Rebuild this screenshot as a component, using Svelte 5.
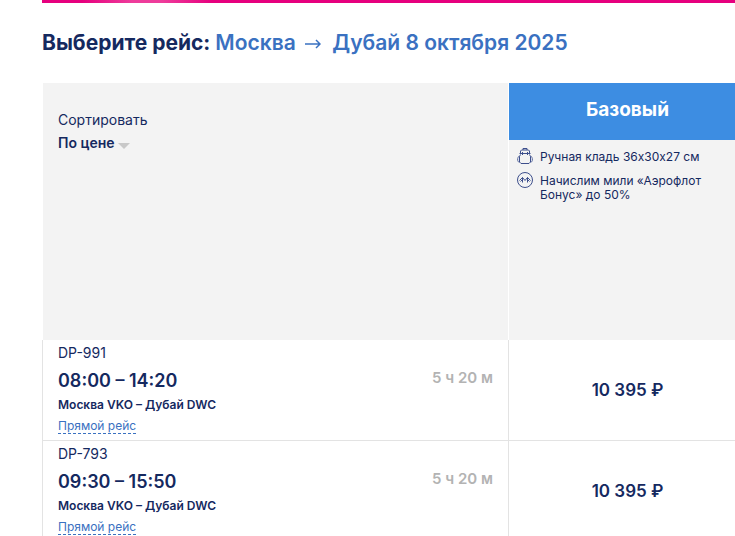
<script>
  const flights = [
    { code: 'DP-991', time: '08:00 – 14:20', route: 'Москва VKO – Дубай DWC', duration: '5 ч 20 м', price: '10 395 ₽' },
    { code: 'DP-793', time: '09:30 – 15:50', route: 'Москва VKO – Дубай DWC', duration: '5 ч 20 м', price: '10 395 ₽' }
  ];
  let sort = $state('price');
</script>

<main>
  <div class="banner"></div>
  <h1>
    Выберите рейс:
    <span class="trip">Москва
      <svg class="arrow" viewBox="0 0 16 12" aria-hidden="true"><path d="M0 6H15M11 2L15 6L11 10" /></svg>
      Дубай 8 октября 2025</span>
  </h1>

  <table>
    <colgroup><col /><col class="fare-col" /></colgroup>
    <thead>
      <tr>
        <th class="sort" scope="col">
          <label for="sort">Сортировать</label>
          <div class="picker">
            <select id="sort" bind:value={sort}>
              <option value="price">По цене</option>
            </select>
            <svg viewBox="0 0 12 6" aria-hidden="true"><path d="M0 0H12L6 6Z" /></svg>
          </div>
        </th>
        <th class="fare" scope="col">
          <div class="fare-name">Базовый</div>
          <ul>
            <li>
              <svg viewBox="0 0 16 16" aria-hidden="true">
                <path class="pockets" d="M2.5 8.500H1.500L.5 10.500V12.500L1.500 14H2.500M13.500 8.500H14.500L15.500 10.500V12.500L14.500 14H13.500" />
                <path d="M6 2V.5H10V2M3.500 5.500V3L4.500 2H11.500L12.500 3V5.500M5.500 4V7M10.500 4V7M3.500 6.500L2.500 8.500V14L4 15.500H12L13.500 14V8.500L12.500 6.500" />
                <path d="M2.500 5.500H13.500" />
              </svg>
              <span>Ручная кладь 36х30х27 см</span>
            </li>
            <li>
              <svg viewBox="0 0 16 16" aria-hidden="true">
                <circle cx="8" cy="8" r="7.500" />
                <path d="M5.500 10.500V5.500L8 8.500L10.500 5.500V10.500M2.500 8.500L5.500 5.500M3.500 9.500L5.500 7.500M10.500 5.500L13.500 8.500M10.500 7.500L12.500 9.500" />
              </svg>
              <span>Начислим мили «Аэрофлот Бонус» до 50%</span>
            </li>
          </ul>
        </th>
      </tr>
    </thead>
    <tbody>
      {#each flights as flight}
        <tr>
          <td class="flight">
            <div class="row">
              <div>
                <div class="code">{flight.code}</div>
                <div class="time">{flight.time}</div>
                <div class="route">{flight.route}</div>
                <button class="direct" type="button">Прямой рейс</button>
              </div>
              <div class="duration">{flight.duration}</div>
            </div>
          </td>
          <td class="price"><button type="button">{flight.price}</button></td>
        </tr>
      {/each}
    </tbody>
  </table>
</main>

<style>
  :global(body) {
    margin: 0;
    background: #fff;
  }
  main {
    padding-left: 42px;
    color: #15295f;
    font-family: Inter, 'Noto Sans', sans-serif;
    font-size: 14px;
  }
  button,
  select {
    margin: 0;
    padding: 0;
    border: 0;
    background: none;
    color: inherit;
    font: inherit;
    cursor: pointer;
  }
  .banner {
    height: 3px;
    background: linear-gradient(90deg, #e6007e 40px, #ee3c9b 90px, #ee3c9b 120px, #e6007e 170px);
  }
  h1 {
    margin: 0;
    padding: 24px 0;
    font-size: 21px;
    line-height: 32px;
    font-weight: 700;
    white-space: nowrap;
  }
  .trip {
    color: #3a71c1;
    font-weight: 600;
  }
  .arrow {
    width: 16px;
    height: 12px;
    margin: 0 6px 0 4px;
    fill: none;
    stroke: currentColor;
    stroke-width: 1.5;
  }
  table {
    width: 100%;
    table-layout: fixed;
    border-spacing: 0;
  }
  .fare-col {
    width: 226px;
  }
  th,
  td {
    padding: 0;
    text-align: left;
    vertical-align: top;
    font-weight: 400;
  }
  th {
    height: 257px;
    background: #f3f3f3;
    background-clip: padding-box;
  }
  .sort {
    box-sizing: border-box;
    padding: 26px 15px 0;
    border: solid #fff;
    border-width: 0 1px;
  }
  .sort label {
    display: block;
    line-height: 22px;
  }
  .picker {
    display: flex;
    align-items: center;
    gap: 3px;
  }
  .picker select {
    appearance: none;
    height: 22px;
    font-weight: 600;
  }
  .picker svg {
    width: 12px;
    height: 6px;
    margin-top: 8px;
    fill: #c8c8c8;
  }
  .fare-name {
    padding: 0 0 3px 11px;
    background: #3d8de2;
    color: #fff;
    font-size: 19px;
    line-height: 54px;
    font-weight: 700;
    text-align: center;
  }
  ul {
    margin: 0;
    padding: 8px 8px 0;
    list-style: none;
    font-size: 12px;
    line-height: 14px;
  }
  li {
    display: flex;
    gap: 7px;
    margin-bottom: 8px;
  }
  li span {
    padding-top: 2px;
  }
  li svg {
    flex: none;
    width: 16px;
    height: 16px;
    fill: none;
    stroke: #3d4f8c;
  }
  .pockets {
    fill: #d5d9e6;
    stroke: #7380ab;
  }
  td {
    border-right: 1px solid #e3e3e3;
    border-bottom: 1px solid #e3e3e3;
  }
  .flight {
    padding: 2px 15px 6px;
    border-left: 1px solid #e3e3e3;
  }
  .row {
    display: flex;
    justify-content: space-between;
  }
  .code {
    line-height: 22px;
  }
  .time {
    font-size: 18px;
    line-height: 34px;
    font-weight: 600;
  }
  .route {
    font-size: 12px;
    line-height: 14px;
    font-weight: 600;
    padding-bottom: 7px;
  }
  .direct {
    display: block;
    border-bottom: 1px dashed #3a71c1;
    color: #3a71c1;
    font-size: 12px;
    line-height: 14px;
  }
  .duration {
    padding-top: 25px;
    color: #b3b3b3;
    font-size: 15px;
    line-height: 22px;
    font-weight: 600;
  }
  .price {
    padding-left: 11px;
    border-right: 0;
    text-align: center;
    vertical-align: middle;
    font-size: 17px;
    font-weight: 600;
  }
</style>
